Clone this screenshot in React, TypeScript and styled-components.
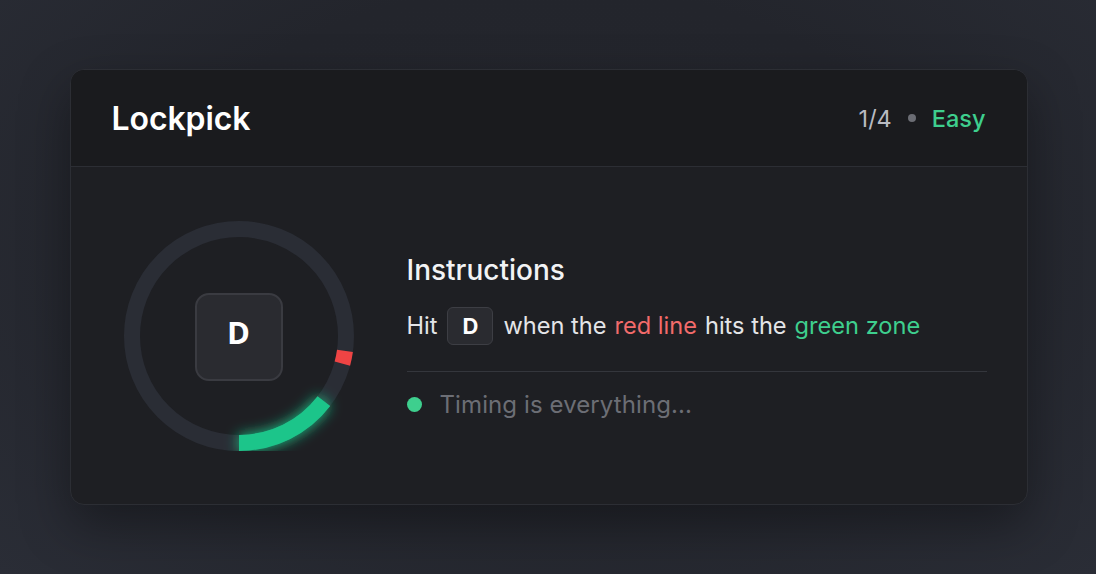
import React from 'react'
import styled, { createGlobalStyle } from 'styled-components'

const GlobalStyle = createGlobalStyle`
  html, body {
    margin: 0;
    padding: 0;
    height: 100%;
  }
  body {
    font-family: Inter, "Noto Sans", sans-serif;
    background: radial-gradient(ellipse at 50% 40%, #24262d 0%, #23252c 50%, #2a2d36 100%);
    background-color: #25272e;
  }
`

const Page = styled.div`
  width: 1096px;
  height: 574px;
  display: flex;
  align-items: center;
  justify-content: center;
  box-sizing: border-box;
`

const Card = styled.div`
  width: 958px;
  height: 436px;
  margin-left: 1px;
  border-radius: 14px;
  background: #1e1f23;
  border: 1px solid #2c2e34;
  box-sizing: border-box;
  overflow: hidden;
  display: flex;
  flex-direction: column;
  box-shadow: 0 20px 50px rgba(0, 0, 0, 0.35);
`

const Header = styled.div`
  height: 97px;
  flex-shrink: 0;
  display: flex;
  align-items: center;
  justify-content: space-between;
  padding: 0 41px 0 41px;
  background: #1a1b1e;
  border-bottom: 1px solid #2c2e34;
  box-sizing: border-box;
`

const Title = styled.div`
  color: #ffffff;
  font-size: 32px;
  font-weight: 600;
  letter-spacing: -0.1px;
`

const Meta = styled.div`
  display: flex;
  align-items: center;
  gap: 16px;
  font-size: 23.5px;
`

const Step = styled.span`
  color: #b9bbc2;
`

const MetaDot = styled.span`
  width: 8px;
  height: 8px;
  border-radius: 50%;
  background: #6b6d74;
`

const Level = styled.span`
  color: #3ecf8e;
  font-weight: 500;
`

const Body = styled.div`
  flex: 1;
  display: flex;
  align-items: center;
  padding: 0 40px 0 53px;
  gap: 53px;
`

const Dial = styled.div`
  position: relative;
  width: 230px;
  height: 230px;
  flex-shrink: 0;
`

const DialKey = styled.div`
  position: absolute;
  left: 71px;
  top: 72px;
  width: 88px;
  height: 88px;
  box-sizing: border-box;
  padding-bottom: 9px;
  border-radius: 14px;
  background: #2a2b30;
  border: 2px solid #3a3b41;
  display: flex;
  align-items: center;
  justify-content: center;
  color: #ffffff;
  font-family: "Open Sans", "Noto Sans", sans-serif;
  font-size: 31px;
  font-weight: 700;
`

const Info = styled.div`
  flex: 1;
  display: flex;
  flex-direction: column;
`

const Heading = styled.div`
  color: #f2f3f5;
  font-size: 28px;
  font-weight: 500;
  margin-bottom: 20px;
`

const Line = styled.div`
  display: flex;
  align-items: center;
  color: #e4e5e8;
  font-size: 23.6px;
  gap: 8px;
  padding-bottom: 26px;
  border-bottom: 1px solid #34363c;
`

const KeyChip = styled.span`
  display: inline-flex;
  align-items: center;
  justify-content: center;
  width: 46px;
  height: 38px;
  box-sizing: border-box;
  border-radius: 6px;
  background: #2a2b30;
  border: 1px solid #3d3e44;
  color: #ffffff;
  font-weight: 700;
  font-size: 22px;
  margin: 0 2px;
`

const Hl = styled.span<{ $tone: 'red' | 'green' }>`
  color: ${(p) => (p.$tone === 'red' ? '#f26b6b' : '#3ecf8e')};
`

const Status = styled.div`
  display: flex;
  align-items: center;
  gap: 18px;
  margin-top: 18px;
  color: #6c6e75;
  font-size: 24px;
  letter-spacing: 0.1px;
`

const StatusDot = styled.span`
  width: 15px;
  height: 15px;
  border-radius: 50%;
  background: #3ecf8e;
`

function polar(deg: number, r: number) {
  const a = (deg * Math.PI) / 180
  return [115 + r * Math.cos(a), 115 + r * Math.sin(a)]
}

function arc(from: number, to: number, r: number) {
  const [x1, y1] = polar(from, r)
  const [x2, y2] = polar(to, r)
  return `M ${x1} ${y1} A ${r} ${r} 0 0 1 ${x2} ${y2}`
}

export default function App() {
  return (
    <>
      <GlobalStyle />
      <Page>
        <Card>
          <Header>
            <Title>Lockpick</Title>
            <Meta>
              <Step>1/4</Step>
              <MetaDot />
              <Level>Easy</Level>
            </Meta>
          </Header>
          <Body>
            <Dial>
              <svg width="230" height="230" viewBox="0 0 230 230">
                <defs>
                  <filter id="glow" x="-50%" y="-50%" width="200%" height="200%">
                    <feGaussianBlur stdDeviation="7" result="b" />
                    <feMerge>
                      <feMergeNode in="b" />
                      <feMergeNode in="SourceGraphic" />
                    </feMerge>
                  </filter>
                </defs>
                <circle cx="115" cy="115" r="107" fill="none" stroke="#2a2d35" strokeWidth="16" />
                <path d={arc(37.5, 90, 107)} fill="none" stroke="#1fc58a" strokeWidth="16" filter="url(#glow)" />
                <path d={arc(8, 15, 107)} fill="none" stroke="#ef4444" strokeWidth="16" />
              </svg>
              <DialKey>D</DialKey>
            </Dial>
            <Info>
              <Heading>Instructions</Heading>
              <Line>
                Hit <KeyChip>D</KeyChip> when the <Hl $tone="red">red line</Hl> hits the{' '}
                <Hl $tone="green">green zone</Hl>
              </Line>
              <Status>
                <StatusDot />
                Timing is everything...
              </Status>
            </Info>
          </Body>
        </Card>
      </Page>
    </>
  )
}
